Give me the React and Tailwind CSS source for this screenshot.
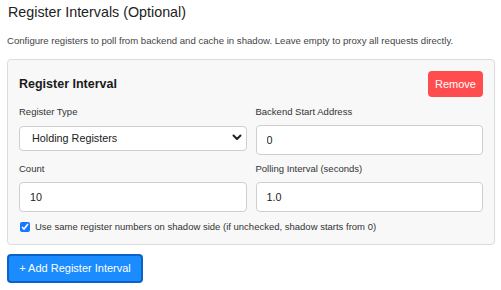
import { useState } from "react";

function Field({ label, children }) {
  return (
    <div className="flex flex-col">
      <label className="mb-[6px] text-[9.5px] leading-[14px] text-[#333]">
        {label}
      </label>
      {children}
    </div>
  );
}

export default function App() {
  const [type, setType] = useState("holding");
  const [start, setStart] = useState("0");
  const [count, setCount] = useState("10");
  const [interval, setInterval] = useState("1.0");
  const [same, setSame] = useState(true);

  return (
    <div
      className="min-h-screen bg-white px-[7px] pt-[4px] text-[#222]"
      style={{ fontFamily: '"Liberation Sans", Arial, sans-serif' }}
    >
      <h2 className="pl-[1px] text-[14.3px] leading-[17px] text-[#222]">
        Register Intervals (Optional)
      </h2>
      <p className="mt-[14px] text-[9.6px] leading-[12px] text-[#444]">
        Configure registers to poll from backend and cache in shadow. Leave
        empty to proxy all requests directly.
      </p>

      <div className="mt-[12px] w-[488px] rounded-[4px] border border-[#dcdcdc] bg-[#f8f8f8] px-[11px] pb-[10px] pt-[11px]">
        <div className="flex items-center justify-between">
          <h3 className="text-[12.5px] font-bold text-[#1a1a1a]">
            Register Interval
          </h3>
          <button className="h-[26px] w-[55px] rounded-[4px] bg-[#ff4d4f] text-[11px] text-white">
            Remove
          </button>
        </div>

        <div className="mt-[8px] grid grid-cols-2 gap-x-[9px] gap-y-[7px]">
          <Field label="Register Type">
            <div className="relative">
              <select
                value={type}
                onChange={(e) => setType(e.target.value)}
                className="h-[25px] w-full appearance-none rounded-[4px] border border-[#cfcfcf] bg-white pl-[12px] text-[10.8px] text-[#222] outline-none"
              >
                <option value="holding">Holding Registers</option>
                <option value="input">Input Registers</option>
                <option value="coils">Coils</option>
              </select>
              <svg
                className="pointer-events-none absolute right-[5px] top-[9px]"
                width="10"
                height="7"
                viewBox="0 0 10 7"
              >
                <path
                  d="M1.5 1.5 L5 5 L8.5 1.5"
                  fill="none"
                  stroke="#222"
                  strokeWidth="2"
                  strokeLinecap="round"
                  strokeLinejoin="round"
                />
              </svg>
            </div>
          </Field>
          <Field label="Backend Start Address">
            <input
              value={start}
              onChange={(e) => setStart(e.target.value)}
              className="h-[30px] w-full rounded-[4px] border border-[#cfcfcf] bg-white px-[10px] text-[10.8px] text-[#222] outline-none"
            />
          </Field>
          <Field label="Count">
            <input
              value={count}
              onChange={(e) => setCount(e.target.value)}
              className="h-[30px] w-full rounded-[4px] border border-[#cfcfcf] bg-white px-[10px] text-[10.8px] text-[#222] outline-none"
            />
          </Field>
          <Field label="Polling Interval (seconds)">
            <input
              value={interval}
              onChange={(e) => setInterval(e.target.value)}
              className="h-[30px] w-full rounded-[4px] border border-[#cfcfcf] bg-white px-[10px] text-[10.8px] text-[#222] outline-none"
            />
          </Field>
        </div>

        <label className="mt-[8px] flex items-center gap-[5px] text-[9.5px] leading-[14px] text-[#333]">
          <input
            type="checkbox"
            checked={same}
            onChange={(e) => setSame(e.target.checked)}
            className="m-0 ml-[1px] h-[10px] w-[10px] accent-[#1677ff]"
          />
          Use same register numbers on shadow side (if unchecked, shadow starts
          from 0)
        </label>
      </div>

      <button className="mt-[9px] h-[29px] w-[136px] rounded-[4px] border-2 border-[#0a64c8] bg-[#1a8cff] text-[11px] text-white">
        + Add Register Interval
      </button>
    </div>
  );
}
